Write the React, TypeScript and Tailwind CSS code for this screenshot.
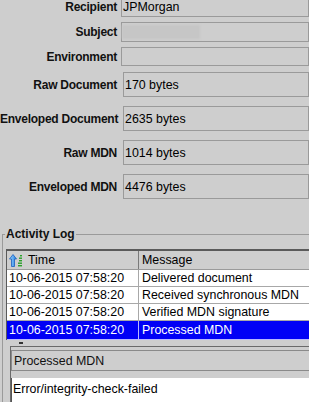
import type { ReactNode } from 'react';

const ROWS = [
  { time: '10-06-2015 07:58:20', msg: 'Delivered document' },
  { time: '10-06-2015 07:58:20', msg: 'Received synchronous MDN' },
  { time: '10-06-2015 07:58:20', msg: 'Verified MDN signature' },
  { time: '10-06-2015 07:58:20', msg: 'Processed MDN', selected: true },
];

function Field({ label, children, className, boxClass }: { label: string; children?: ReactNode; className: string; boxClass: string }) {
  return (
    <div className={`flex shrink-0 items-center ${className}`}>
      <div className="w-[117px] shrink-0 text-right font-bold text-[12px] tracking-[-0.25px] text-[#111] whitespace-nowrap">{label}</div>
      <div className={`h-full flex-1 flex items-center border border-[#9a9a9a] ${boxClass}`}>{children}</div>
    </div>
  );
}

function SortIcon() {
  return (
    <svg width="14" height="13" viewBox="0 0 14 13">
      <defs>
        <linearGradient id="arr" x1="0" x2="1" y1="0" y2="0">
          <stop offset="0" stopColor="#9fd4ff" />
          <stop offset="1" stopColor="#1f7fe0" />
        </linearGradient>
      </defs>
      <path d="M4 0.5 L7.5 5 L5.5 5 L5.5 12.5 L2.5 12.5 L2.5 5 L0.5 5 Z" fill="url(#arr)" stroke="#1a5fbf" strokeWidth="0.8" />
      <rect x="11" y="1" width="2" height="1.4" fill="#2aa02a" />
      <rect x="10" y="3.5" width="3" height="1.4" fill="#2aa02a" />
      <rect x="10" y="6" width="3" height="1.4" fill="#2aa02a" />
      <rect x="9" y="8.5" width="4" height="1.4" fill="#2aa02a" />
      <rect x="9" y="11" width="4" height="1.4" fill="#2aa02a" />
    </svg>
  );
}

export default function App() {
  return (
    <div className="w-[309px] h-[402px] overflow-hidden bg-[#cecece] text-[12.4px] leading-[14px] text-black flex flex-col" style={{ fontFamily: '"Liberation Sans", Arial, sans-serif' }}>
      <Field label="Recipient" className="-mt-[3px] h-[20px]" boxClass="ml-[4px] pl-[1px]">JPMorgan</Field>
      <Field label="Subject" className="mt-[5px] h-[20px]" boxClass="ml-[4px]">
        <div className="h-[14px] w-[78px] bg-[#c6c6c6] blur-[1px]" />
      </Field>
      <Field label="Environment" className="mt-[5px] h-[19px]" boxClass="ml-[4px]" />
      <Field label="Raw Document" className="mt-[6px] h-[25px]" boxClass="ml-[6px] pl-[1px]">170 bytes</Field>
      <Field label="Enveloped Document" className="mt-[9px] h-[25px]" boxClass="ml-[6px] pl-[1px]">2635 bytes</Field>
      <Field label="Raw MDN" className="mt-[9px] h-[25px]" boxClass="ml-[6px] pl-[1px]">1014 bytes</Field>
      <Field label="Enveloped MDN" className="mt-[9px] h-[25px]" boxClass="ml-[6px] pl-[1px]">4476 bytes</Field>

      <fieldset className="mt-[28px] ml-[2px] border-t border-l border-[#9a9a9a] flex-1 min-h-0">
        <legend className="ml-[2px] px-[1px] font-bold text-[12px] text-[#111] leading-[14px]">Activity Log</legend>
        <div className="mt-[8px] ml-[3px] border-t-2 border-l border-[#5a5a5a] w-[320px]">
          <div className="grid grid-cols-[132px_1fr] h-[19px] border-b border-[#9a9a9a] bg-[#cecece]">
            <div className="flex items-center gap-[5px] pl-[2px] border-r border-[#7a7a7a]">
              <SortIcon />
              <span>Time</span>
            </div>
            <div className="flex items-center pl-[3px]">Message</div>
          </div>
          {ROWS.map((r, i) => (
            <div
              key={i}
              className={`grid grid-cols-[132px_1fr] border-b ${r.selected ? 'h-[19px] bg-[#0000f6] text-white border-[#b8b8ff]' : 'h-[17px] bg-white border-[#a8a8a8]'}`}
            >
              <div className={`flex items-center pl-[2px] border-r ${r.selected ? 'border-[#b8b8ff]' : 'border-[#a8a8a8]'}`}>{r.time}</div>
              <div className="flex items-center pl-[3px] whitespace-nowrap">{r.msg}</div>
            </div>
          ))}
        </div>
        <div className="mt-[2px] ml-[16px] h-[2px] w-[4px] bg-[#333]" />
        <div className="ml-[7px] mt-[2px] border-t border-l border-[#6a6a6a] pt-[3px] w-[320px]">
          <div className="h-[21px] flex items-center pl-[2px] border border-[#8a8a8a] text-[#111]">Processed MDN</div>
          <div className="mt-[7px] h-[40px] bg-white border-l border-[#555] pl-[1px] pt-[4px]">Error/integrity-check-failed</div>
        </div>
      </fieldset>
    </div>
  );
}
